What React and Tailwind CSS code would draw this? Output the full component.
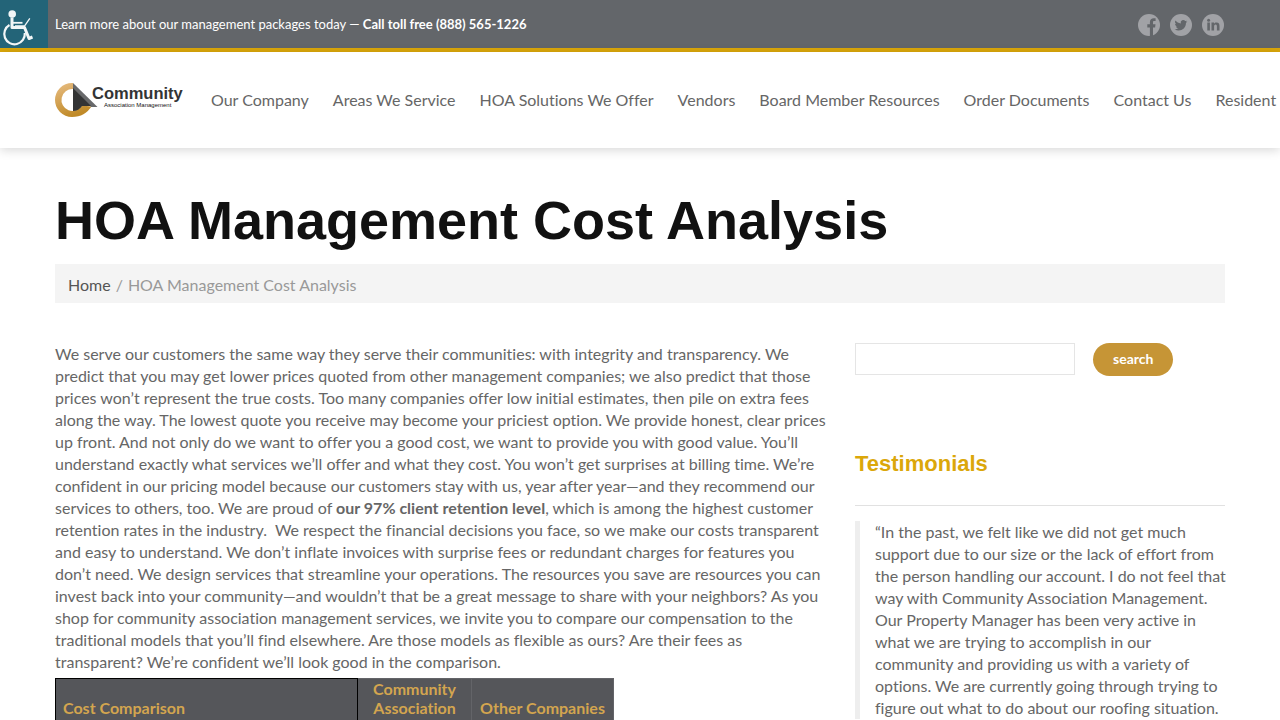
import React, { useState } from "react";

const NAV_ITEMS = [
  "Our Company",
  "Areas We Service",
  "HOA Solutions We Offer",
  "Vendors",
  "Board Member Resources",
  "Order Documents",
  "Contact Us",
  "Resident",
];

const AccessibilityIcon = () => (
  <svg viewBox="0 0 48 48" className="w-12 h-12" fill="none" stroke="#f2f6f7" aria-hidden="true">
    <circle cx="12.2" cy="14" r="3.8" fill="#f2f6f7" stroke="none" />
    <path d="M12 17.500v10h12.500l4.500 11 3.500-1.500" strokeWidth="3" strokeLinejoin="round" />
    <path d="M12 22.800h10.500" strokeWidth="1.800" />
    <path d="M15 26h9.500L29.800 18.300" strokeWidth="1.300" />
    <path d="M9.500 25a10.300 10.300 0 1 0 15.300 8" strokeWidth="2.200" />
  </svg>
);

const Logo = () => (
  <svg viewBox="0 0 256 68" className="w-32 shrink-0" role="img" aria-label="Community Association Management">
    <defs>
      <linearGradient id="gold" x1="0" y1="0" x2="0.4" y2="1">
        <stop offset="0" stopColor="#e8bd83" />
        <stop offset="1" stopColor="#c08a28" />
      </linearGradient>
    </defs>
    <path d="M36 0H34A34 34 0 0 0 34 68C52 68 64 60 73 47L54 45A22 22 0 1 1 36 12z" fill="url(#gold)" />
    <path d="M36 0L85 48H72L36 11z" fill="#68696b" />
    <path d="M36 10L72 46L54 46A22 22 0 0 1 36 56z" fill="#333435" />
    <text x="74" y="32" fontSize="33" fontWeight="700" fill="#333435" className="font-['Liberation_Sans',sans-serif]">
      Community
    </text>
    <text x="98" y="47" fontSize="12" fill="#111" className="font-['Liberation_Sans',sans-serif]">
      Association Management
    </text>
  </svg>
);

// Round badges, the glyph is cut in the bar's own grey
const SOCIAL = [
  {
    name: "Facebook",
    glyph: <path d="M11.900 22v-8.600H9.300v-3.100h2.600V8.200c0-2.600 1.500-4 3.900-4 .8 0 1.500.1 1.800.1v2.800h-1.300c-1 0-1.300.5-1.300 1.300v1.900h2.500l-.4 3.100H15V22z" />,
  },
  {
    name: "Twitter",
    glyph: <path d="M17.300 7.500c-.5.200-1 .3-1.500.4.500-.3 1-.9 1.100-1.500-.5.300-1 .5-1.600.6a2.600 2.600 0 0 0-4.500 2.400C8.600 9.300 6.700 8.200 5.400 6.600c-.7 1.200-.4 2.700.8 3.500-.4 0-.8-.1-1.200-.3 0 1.200.9 2.300 2.100 2.600-.4.100-.8.100-1.200 0 .3 1 1.300 1.800 2.500 1.800A5.300 5.300 0 0 1 4.600 15.300c4.900 3.100 11.400 0 11.400-6.500.5-.3 1-.8 1.300-1.300z" />,
  },
  {
    name: "LinkedIn",
    glyph: (
      <>
        <circle cx="6.600" cy="6.300" r="1.500" />
        <path d="M5.300 8.600h2.600v8H5.300zM9.500 8.600H12v1.100c.5-.8 1.300-1.300 2.500-1.300 2.500 0 3 1.700 3 3.800v4.400h-2.600v-3.900c0-1-.1-2.100-1.300-2.100s-1.500 1-1.500 2v4H9.500z" />
      </>
    ),
  },
];

const TopBar = () => (
  <div className="flex h-[52px] border-b-4 border-[#dba70a] bg-[#63666a] text-white">
    <a href="#accessibility" aria-label="Accessibility options" className="w-12 shrink-0 bg-[#236478]">
      <AccessibilityIcon />
    </a>
    <div className="flex flex-1 items-center justify-between pl-[7px] pr-14">
      <p className="text-[13px] leading-5">
        Learn more about our management packages today — <strong>Call toll free (888) 565-1226</strong>
      </p>
      <div className="flex gap-[10px] pt-[2px]">
        {SOCIAL.map((item) => (
          <a key={item.name} href="#" aria-label={item.name}>
            <svg viewBox="0 0 22 22" className="w-[22px] h-[22px]" fill="#63666a">
              <circle cx="11" cy="11" r="11" fill="#a1a2a6" />
              {item.glyph}
            </svg>
          </a>
        ))}
      </div>
    </div>
  </div>
);

const Header = () => (
  <header className="flex h-24 items-center overflow-x-clip bg-white pl-[55px] shadow-[0_2px_10px_rgba(0,0,0,0.16)]">
    <a href="#" className="shrink-0">
      <Logo />
    </a>
    <nav className="ml-4 flex whitespace-nowrap">
      {NAV_ITEMS.map((item) => (
        <a key={item} href="#" className="px-3 leading-6">
          {item}
        </a>
      ))}
    </nav>
  </header>
);

// Line break on wide screens only, small screens wrap by themselves
const Br = () => (
  <>
    {" "}
    <br className="hidden lg:inline" />
  </>
);

const Sidebar = () => {
  const [query, setQuery] = useState("");

  return (
    <aside className="w-[370px] shrink-0">
      <form className="flex items-start gap-[18px]" onSubmit={(e) => e.preventDefault()}>
        <input
          type="text"
          aria-label="Search"
          value={query}
          onChange={(e) => setQuery(e.target.value)}
          className="h-8 w-[220px] border border-[#e5e5e5] px-2"
        />
        <button type="submit" className="h-[33px] rounded-full bg-[#c69536] px-5 pb-[2px] text-[14px] font-bold text-white">
          search
        </button>
      </form>
      <h2 className="mt-[74px] border-b border-[#e1e1e1] pb-[27px] font-['Liberation_Sans',sans-serif] text-[22px] font-bold leading-7 text-[#dba70a]">
        Testimonials
      </h2>
      <blockquote className="mt-[15px] border-l-[5px] border-[#eee] pl-[15px] lg:whitespace-nowrap">
        “In the past, we felt like we did not get much
        <Br />
        support due to our size or the lack of effort from
        <Br />
        the person handling our account. I do not feel that
        <Br />
        way with Community Association Management.
        <Br />
        Our Property Manager has been very active in
        <Br />
        what we are trying to accomplish in our
        <Br />
        community and providing us with a variety of
        <Br />
        options. We are currently going through trying to
        <Br />
        figure out what to do about our roofing situation.
      </blockquote>
    </aside>
  );
};

const CostTable = () => (
  <table className="mt-[5px] border-collapse bg-[#55565a] leading-[19px] text-[#d3a54f]">
    <thead>
      <tr className="align-bottom">
        <th scope="col" className="w-[302px] border border-black px-[7px] pb-2 text-left">
          Cost Comparison
        </th>
        <th scope="col" className="w-[114px] border border-[#636468] px-[7px] pb-2">
          Community Association
        </th>
        <th scope="col" className="w-[142px] border border-[#636468] px-[7px] pb-2">
          Other Companies
        </th>
      </tr>
    </thead>
  </table>
);

const App = () => {
  return (
    <div className="min-h-screen bg-white font-[Lato,sans-serif] text-[16px] leading-[22px] text-[#666] [font-variant-ligatures:no-common-ligatures]">
      <TopBar />
      <Header />

      <main className="mx-auto max-w-[1170px] pt-10">
        <h1 className="font-['Liberation_Sans',sans-serif] text-[54px] font-bold leading-[64px] text-[#111]">
          HOA Management Cost Analysis
        </h1>
        <nav aria-label="Breadcrumb" className="mt-3 flex gap-[5px] bg-[#f4f4f4] px-[13px] pb-[7px] pt-[10px] text-[#999]">
          <a href="#" className="text-[#555]">
            Home
          </a>
          <span>/</span>
          <span>HOA Management Cost Analysis</span>
        </nav>

        <div className="mt-10 flex justify-between gap-[30px]">
          <article className="min-w-0 flex-1">
            <p className="lg:whitespace-nowrap">
              We serve our customers the same way they serve their communities: with integrity and transparency. We
              <Br />
              predict that you may get lower prices quoted from other management companies; we also predict that those
              <Br />
              prices won’t represent the true costs. Too many companies offer low initial estimates, then pile on extra fees
              <Br />
              along the way. The lowest quote you receive may become your priciest option. We provide honest, clear prices
              <Br />
              up front. And not only do we want to offer you a good cost, we want to provide you with good value. You’ll
              <Br />
              understand exactly what services we’ll offer and what they cost. You won’t get surprises at billing time. We’re
              <Br />
              confident in our pricing model because our customers stay with us, year after year—and they recommend our
              <Br />
              services to others, too. We are proud of <strong>our 97% client retention level</strong>, which is among the
              highest customer
              <Br />
              retention rates in the industry.&nbsp; We respect the financial decisions you face, so we make our costs
              transparent
              <Br />
              and easy to understand. We don’t inflate invoices with surprise fees or redundant charges for features you
              <Br />
              don’t need. We design services that streamline your operations. The resources you save are resources you can
              <Br />
              invest back into your community—and wouldn’t that be a great message to share with your neighbors? As you
              <Br />
              shop for community association management services, we invite you to compare our compensation to the
              <Br />
              traditional models that you’ll find elsewhere. Are those models as flexible as ours? Are their fees as
              <Br />
              transparent? We’re confident we’ll look good in the comparison.
            </p>
            <CostTable />
          </article>
          <Sidebar />
        </div>
      </main>
    </div>
  );
};

export default App;
